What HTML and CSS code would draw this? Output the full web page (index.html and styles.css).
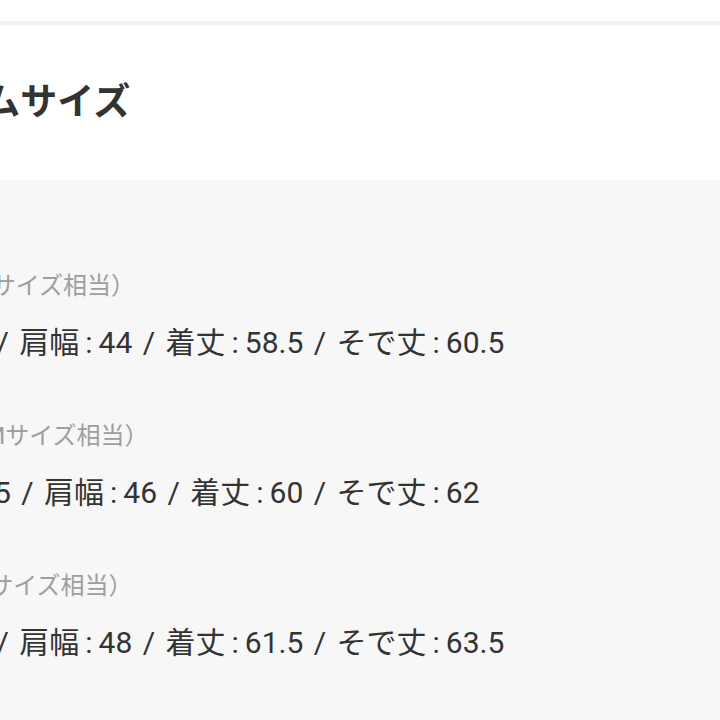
FILE: index.html
```html
<!DOCTYPE html>
<html lang="ja">
<head>
<meta charset="utf-8">
<link rel="stylesheet" href="styles.css">
</head>
<body>
<div class="topbar"></div>
<header class="header">
  <h2 class="title">アイテムサイズ</h2>
</header>
<section class="content">
  <div class="sizes">
    <div class="size">
      <p class="label">サイズS（Sサイズ相当）</p>
      <p class="value">身幅<span class="colon">:</span>48 / 肩幅<span class="colon">:</span>44 / 着丈<span class="colon">:</span>58.5 / そで丈<span class="colon">:</span>60.5</p>
    </div>
    <div class="size">
      <p class="label">サイズM（Mサイズ相当）</p>
      <p class="value">身幅<span class="colon">:</span>50.5 / 肩幅<span class="colon">:</span>46 / 着丈<span class="colon">:</span>60 / そで丈<span class="colon">:</span>62</p>
    </div>
    <div class="size">
      <p class="label">サイズL（Lサイズ相当）</p>
      <p class="value">身幅<span class="colon">:</span>52 / 肩幅<span class="colon">:</span>48 / 着丈<span class="colon">:</span>61.5 / そで丈<span class="colon">:</span>63.5</p>
    </div>
  </div>
</section>
</body>
</html>
```

FILE: styles.css
```css
* { box-sizing: border-box; }
html, body { margin: 0; padding: 0; }
body {
  background: #ffffff;
  font-family: Roboto, "Noto Sans CJK JP", sans-serif;
  color: #333333;
  width: 720px;
  height: 720px;
  overflow: hidden;
}
.topbar {
  height: 25px;
  border-bottom: 4px solid #f2f2f2;
}
.header {
  height: 155px;
  display: flex;
  align-items: center;
  overflow: hidden;
}
.title {
  margin: 0 0 0 -124px;
  font-size: 37px;
  font-weight: 700;
  color: #333333;
  white-space: nowrap;
  line-height: 1;
}
.content {
  background: #f7f7f7;
  height: 540px;
  overflow: hidden;
  padding-top: 92px;
}
.sizes {
  margin-left: -127px;
  display: flex;
  flex-direction: column;
  gap: 61px;
}
.size {
  display: flex;
  flex-direction: column;
  gap: 25px;
}
.label {
  margin: 0;
  font-size: 24px;
  line-height: 28px;
  color: #9e9e9e;
  white-space: nowrap;
  text-indent: -5px;
}
.value {
  margin: 0;
  font-size: 30px;
  line-height: 36px;
  color: #333333;
  white-space: nowrap;
  word-spacing: 3px;
}
.colon {
  margin: 0 6px;
}
```
